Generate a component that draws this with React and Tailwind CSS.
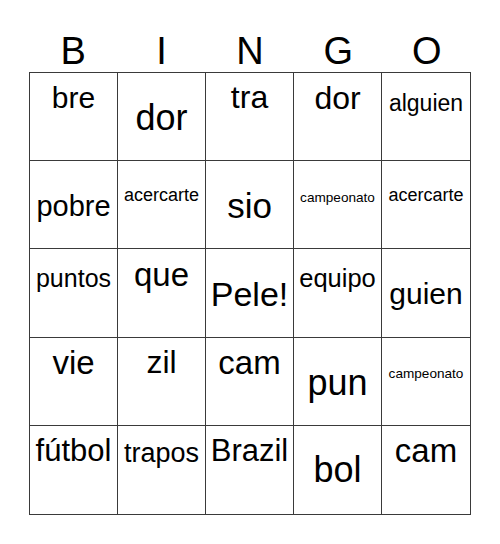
const letters = ['B', 'I', 'N', 'G', 'O']

// [word, font size px, padding top px]
const rows = [
  [['bre', 30, 10], ['dor', 36, 27], ['tra', 32, 8], ['dor', 32, 9], ['alguien', 23, 19]],
  [['pobre', 29, 31], ['acercarte', 18, 25], ['sio', 35, 27], ['campeonato', 13.6, 30], ['acercarte', 18, 25]],
  [['puntos', 25, 17], ['que', 33, 9], ['Pele!', 34, 28], ['equipo', 25.5, 17], ['guien', 30, 30]],
  [['vie', 33, 8], ['zil', 32, 8], ['cam', 33, 8], ['pun', 36, 27], ['campeonato', 13.6, 29]],
  [['fútbol', 31, 9], ['trapos', 27, 14], ['Brazil', 31, 9], ['bol', 36, 26], ['cam', 33, 8]],
]

export default function App() {
  return (
    <div className="h-[544px] w-[500px] bg-white font-['Liberation_Sans',Arial,sans-serif] text-black">
      <div className="ml-[29px] grid h-[72px] w-[442px] grid-cols-5 pt-[32px]">
        {letters.map((letter) => (
          <div key={letter} className="text-center text-[38px] leading-none">
            {letter}
          </div>
        ))}
      </div>

      <div className="ml-[29px] grid h-[443px] w-[442px] grid-cols-5 grid-rows-5 border border-[#3a3a3a]">
        {rows.map((row, rowIndex) =>
          row.map(([word, size, top], colIndex) => (
            <div
              key={`${rowIndex}-${colIndex}`}
              className={`overflow-hidden text-center leading-none ${colIndex < 4 ? 'border-r border-[#3a3a3a]' : ''} ${rowIndex < 4 ? 'border-b border-[#3a3a3a]' : ''}`}
              style={{ fontSize: `${size}px`, paddingTop: `${top}px` }}
            >
              {word}
            </div>
          )),
        )}
      </div>
    </div>
  )
}
